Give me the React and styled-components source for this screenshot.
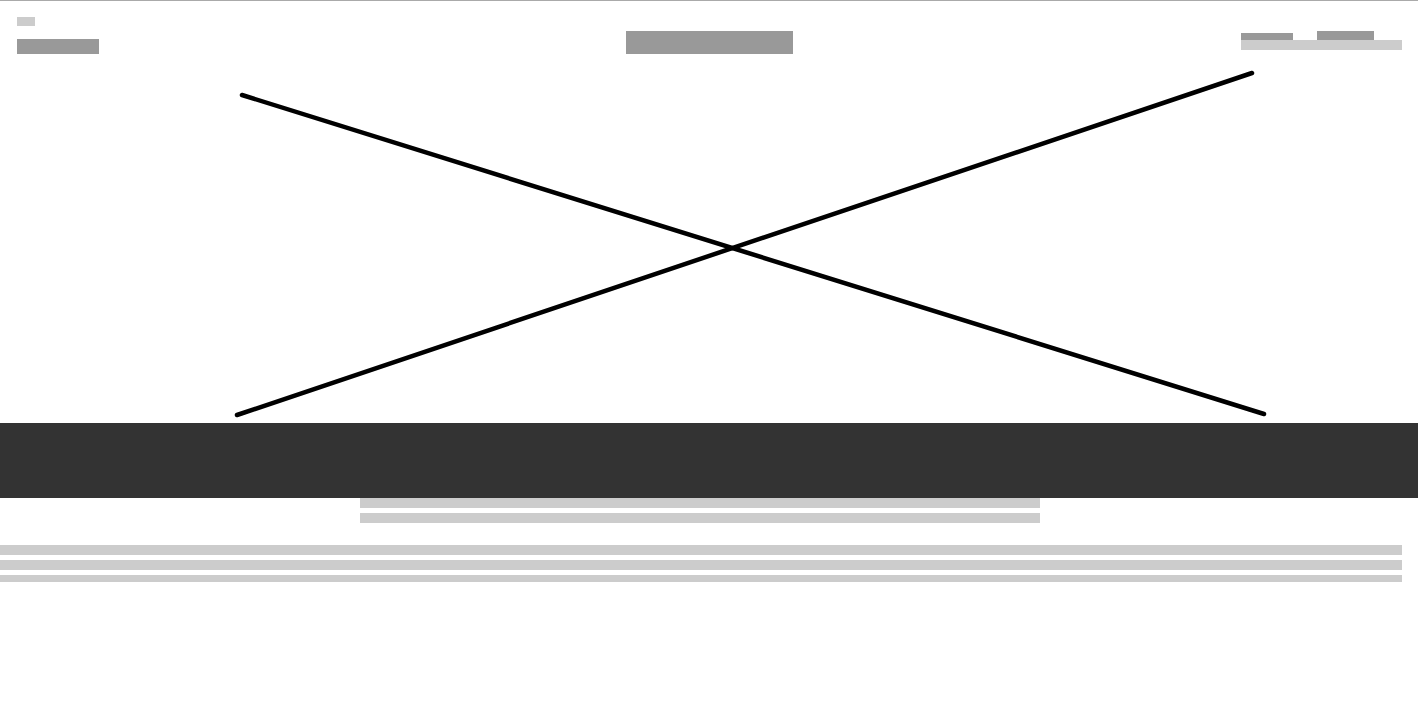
import styled, { createGlobalStyle } from "styled-components";

const GlobalStyle = createGlobalStyle`
  html, body {
    margin: 0;
    padding: 0;
    background: #fff;
    font-family: "Liberation Sans", Arial, sans-serif;
  }
`;

const Page = styled.div`
  border-top: 1px solid #aaa;
  width: 1418px;
`;

const Header = styled.header`
  display: grid;
  grid-template-columns: 1fr auto 1fr;
  height: 54px;
  padding: 0 16px 0 17px;
`;

const LeftCol = styled.div`
  display: flex;
  flex-direction: column;
  align-items: flex-start;
  padding-top: 16px;
  gap: 13px;
`;

const CenterCol = styled.div`
  padding-top: 30px;
`;

const RightCol = styled.div`
  justify-self: end;
  width: 161px;
  padding-top: 30px;
  display: flex;
  flex-direction: column;
`;

const LinkRow = styled.div`
  display: flex;
  align-items: flex-end;
  gap: 24px;
`;

const Block = styled.div`
  width: ${(p) => p.$w};
  height: ${(p) => p.$h}px;
  background: ${(p) => (p.$dark ? "#999" : "#ccc")};
  flex-shrink: 0;
`;

const Hero = styled.svg`
  display: block;
  width: 1418px;
  height: 368px;
`;

const Band = styled.section`
  height: 75px;
  background: #333;
`;

const Lines = styled.div`
  display: flex;
  flex-direction: column;
  gap: 5px;
  width: ${(p) => p.$w}px;
  margin: ${(p) => p.$m};
`;

const App = () => (
  <>
    <GlobalStyle />
    <Page>
      <Header>
        <LeftCol>
          <Block $w="18px" $h={9} />
          <Block $w="82px" $h={15} $dark />
        </LeftCol>
        <CenterCol>
          <Block $w="167px" $h={23} $dark />
        </CenterCol>
        <RightCol>
          <LinkRow>
            <Block $w="52px" $h={7} $dark />
            <Block $w="57px" $h={9} $dark />
          </LinkRow>
          <Block $w="161px" $h={10} />
        </RightCol>
      </Header>
      <Hero viewBox="0 55 1418 368">
        <g stroke="#000" strokeWidth="4.5" strokeLinecap="round">
          <line x1="242" y1="95" x2="1264" y2="414" />
          <line x1="237" y1="415" x2="1252" y2="73" />
        </g>
      </Hero>
      <Band />
      <Lines $w={680} $m="0 0 0 360px">
        <Block $w="100%" $h={10} />
        <Block $w="100%" $h={10} />
      </Lines>
      <Lines $w={1402} $m="22px 0 0 0">
        <Block $w="100%" $h={10} />
        <Block $w="100%" $h={10} />
        <Block $w="100%" $h={7} />
      </Lines>
    </Page>
  </>
);

export default App;
